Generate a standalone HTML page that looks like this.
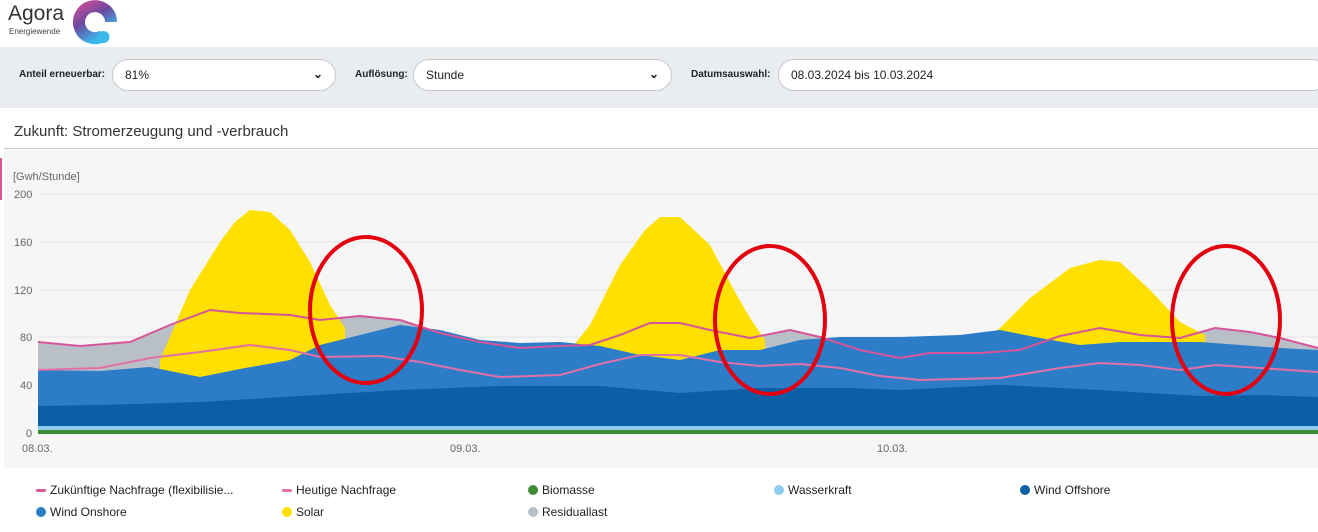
<!DOCTYPE html>
<html><head><meta charset="utf-8"><style>
*{margin:0;padding:0;box-sizing:border-box}
body{width:1318px;height:532px;overflow:hidden;background:#fff;font-family:"Liberation Sans",sans-serif;position:relative;color:#222}
.bar{position:absolute;left:0;top:47px;width:1318px;height:61px;background:#e9edf1}
.lbl{position:absolute;top:69px;font-size:10px;font-weight:bold;color:#222}
.sel{position:absolute;top:59px;height:32px;background:#fff;border:1px solid #c8c8c8;border-radius:16px;font-size:12px;padding:8px 12px;color:#222}
.chev{position:absolute;right:12px;top:7px;font-size:12px;font-weight:bold}
.leg{position:absolute;font-size:12px;color:#222}
.dash{display:inline-block;width:10px;height:3px;vertical-align:middle;margin-right:4px;border-radius:2px}
.dot{display:inline-block;width:10px;height:10px;border-radius:50%;vertical-align:middle;margin-right:4px;margin-top:-2px}
</style></head><body>
<div style="position:absolute;left:8px;top:2px;font-size:21px;color:#333">Agora</div>
<div style="position:absolute;left:9px;top:27px;font-size:8px;color:#444">Energiewende</div>
<svg style="position:absolute;left:0;top:0" width="130" height="46" viewBox="0 0 130 46">
<defs><linearGradient id="g" x1="0" y1="0" x2="0.6" y2="1"><stop offset="0" stop-color="#c04a9a"/><stop offset=".45" stop-color="#6a4aa0"/><stop offset="1" stop-color="#3ab8ea"/></linearGradient></defs>
<path d="M111 22 A16 16 0 1 0 103 36" fill="none" stroke="url(#g)" stroke-width="12"/>
<circle cx="103.5" cy="37" r="6" fill="#3ab8ea"/>
</svg>
<div class="bar"></div>
<div class="lbl" style="left:19px">Anteil erneuerbar:</div>
<div class="sel" style="left:112px;width:224px">81%<span class="chev">⌄</span></div>
<div class="lbl" style="left:355px">Auflösung:</div>
<div class="sel" style="left:413px;width:259px">Stunde<span class="chev">⌄</span></div>
<div class="lbl" style="left:691px">Datumsauswahl:</div>
<div class="sel" style="left:778px;width:550px">08.03.2024 bis 10.03.2024</div>
<div style="position:absolute;left:14px;top:123px;font-size:15px;color:#333">Zukunft: Stromerzeugung und -verbrauch</div>
<div style="position:absolute;left:4px;top:148px;width:1314px;height:1px;background:#ccc"></div>
<div style="position:absolute;left:4px;top:149px;width:1314px;height:319px;background:#f6f6f6"></div>
<div style="position:absolute;left:0;top:158px;width:2px;height:42px;background:#d6559a"></div>
<svg style="position:absolute;left:0;top:0" width="1318" height="532">
<g font-family="Liberation Sans" font-size="11" fill="#666">
<text x="13" y="180">[Gwh/Stunde]</text>
<text x="14" y="198">200</text><text x="14" y="246">160</text><text x="14" y="294">120</text><text x="20" y="341">80</text><text x="20" y="389">40</text><text x="26" y="437">0</text>
<text x="22" y="452">08.03.</text><text x="450" y="452">09.03.</text><text x="877" y="452">10.03.</text>
</g>
<g stroke="#e4e4e4"><line x1="38" y1="194" x2="1318" y2="194"/><line x1="38" y1="242" x2="1318" y2="242"/><line x1="38" y1="290" x2="1318" y2="290"/><line x1="38" y1="337" x2="1318" y2="337"/><line x1="38" y1="385" x2="1318" y2="385"/></g>
<polygon fill="#b9bfc7" points="38,342 80,346 130,342 170,325 210,310 240,313 290,315 320,320 360,316 400,320 440,333 480,342 520,348 560,346 590,345 620,335 650,323 680,323 710,330 750,338 790,330 820,337 860,350 900,358 930,353 980,353 1020,350 1060,336 1100,328 1140,335 1180,338 1215,328 1250,332 1280,338 1318,348 1318,432 38,432"/>
<polygon fill="#ffe000" points="160,360 190,290 220,242 235,222 250,210 270,212 290,230 310,262 330,305 345,328 345,432 160,432"/>
<polygon fill="#ffe000" points="570,350 590,325 620,265 645,230 660,217 680,217 710,245 735,292 750,318 765,340 765,432 570,432"/>
<polygon fill="#ffe000" points="990,335 1000,328 1030,298 1070,268 1100,260 1120,262 1150,290 1180,322 1205,335 1205,432 990,432"/>
<polygon fill="#2c7cc8" points="38,370 100,371 150,367 200,377 240,369 290,360 320,345 360,335 400,325 440,330 480,340 520,343 560,342 600,346 640,355 680,360 720,350 760,350 800,340 840,337 900,337 960,335 1000,330 1040,338 1080,345 1120,342 1160,342 1200,342 1240,345 1280,348 1318,350 1318,432 38,432"/>
<polygon fill="#0a5fa5" points="38,406 100,405 200,402 300,396 400,390 500,386 600,386 680,393 760,388 850,388 900,390 1000,385 1100,390 1200,396 1260,395 1318,397 1318,432 38,432"/>
<rect x="38" y="426" width="1280" height="4" fill="#8ecbf0"/>
<rect x="38" y="430" width="1280" height="4" fill="#3d8c34"/>
<polyline fill="none" stroke="#d6559a" stroke-width="2" points="38,342 80,346 130,342 170,325 210,310 240,313 290,315 320,320 360,316 400,320 440,333 480,342 520,348 560,346 590,345 620,335 650,323 680,323 710,330 750,338 790,330 820,337 860,350 900,358 930,353 980,353 1020,350 1060,336 1100,328 1140,335 1180,338 1215,328 1250,332 1280,338 1318,348"/>
<polyline fill="none" stroke="#e070a8" stroke-width="2" points="38,370 100,368 150,358 200,352 250,345 290,350 320,357 380,356 420,362 460,370 500,377 560,375 600,364 640,355 680,355 720,362 760,366 800,364 840,368 880,376 920,380 1000,378 1060,368 1100,363 1140,365 1180,370 1215,365 1260,368 1318,372"/>
<g fill="none" stroke="#e3000f" stroke-width="4">
<ellipse cx="366" cy="310" rx="56" ry="73"/><ellipse cx="770" cy="320" rx="55" ry="74"/><ellipse cx="1226" cy="320" rx="54" ry="74"/>
</g>
</svg>
<div class="leg" style="left:36px;top:483px"><span class="dash" style="background:#d6559a"></span>Zukünftige Nachfrage (flexibilisie...</div>
<div class="leg" style="left:282px;top:483px"><span class="dash" style="background:#e070a8"></span>Heutige Nachfrage</div>
<div class="leg" style="left:528px;top:483px"><span class="dot" style="background:#3d8c34"></span>Biomasse</div>
<div class="leg" style="left:774px;top:483px"><span class="dot" style="background:#8ecbf0"></span>Wasserkraft</div>
<div class="leg" style="left:1020px;top:483px"><span class="dot" style="background:#0a5fa5"></span>Wind Offshore</div>
<div class="leg" style="left:36px;top:505px"><span class="dot" style="background:#2c7cc8"></span>Wind Onshore</div>
<div class="leg" style="left:282px;top:505px"><span class="dot" style="background:#ffe000"></span>Solar</div>
<div class="leg" style="left:528px;top:505px"><span class="dot" style="background:#b9bfc7"></span>Residuallast</div>
</body></html>
